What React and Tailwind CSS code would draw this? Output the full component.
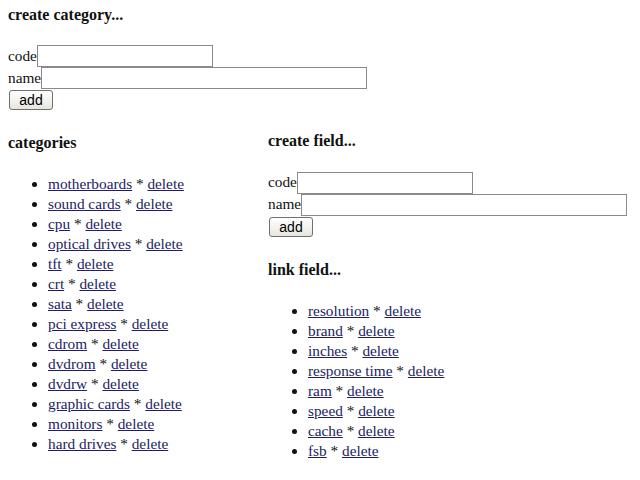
const categories = [
  "motherboards",
  "sound cards",
  "cpu",
  "optical drives",
  "tft",
  "crt",
  "sata",
  "pci express",
  "cdrom",
  "dvdrom",
  "dvdrw",
  "graphic cards",
  "monitors",
  "hard drives",
];

const fields = ["resolution", "brand", "inches", "response time", "ram", "speed", "cache", "fsb"];

function CreateForm({ className = "mt-5" }) {
  return (
    <div className={className}>
      <div className="flex h-[22px] items-center">
        <span>code</span>
        <input className="h-[22px] w-[176px] border border-[#8a8a8a] bg-white" />
      </div>
      <div className="flex h-[22px] items-center">
        <span>name</span>
        <input className="h-[22px] w-[326px] border border-[#8a8a8a] bg-white" />
      </div>
      <button
        type="button"
        className="ml-px mt-px h-5 w-[44px] rounded-[3px] border border-[#707070] bg-gradient-to-b from-white to-[#e6e6e0] text-[14px] leading-none text-black"
        style={{ fontFamily: '"Liberation Sans", Arial, sans-serif' }}
      >
        add
      </button>
    </div>
  );
}

function LinkList({ items, className = "mt-[21px]" }) {
  return (
    <ul className={`${className} list-disc pl-10`}>
      {items.map((item) => (
        <li key={item} className="h-5 leading-5">
          <a href="#" className="text-[#221d62] underline">{item}</a>
          {" * "}
          <a href="#" className="text-[#221d62] underline">delete</a>
        </li>
      ))}
    </ul>
  );
}

export default function App() {
  return (
    <div
      className="min-h-[480px] bg-white px-2 pt-[5px] text-[15.3px] text-[#111]"
      style={{ fontFamily: '"Liberation Serif", "Times New Roman", serif' }}
    >
      <h4 className="text-[16px] font-bold leading-5">create category...</h4>
      <CreateForm />

      <div className="flex items-start">
        <div className="w-[260px]">
          <h4 className="mt-[21px] text-[16px] font-bold leading-5">categories</h4>
          <LinkList items={categories} />
        </div>
        <div>
          <h4 className="mt-[19px] text-[16px] font-bold leading-5">create field...</h4>
          <CreateForm className="mt-[21px]" />
          <h4 className="mt-[21px] text-[16px] font-bold leading-5">link field...</h4>
          <LinkList items={fields} />
        </div>
      </div>
    </div>
  );
}
